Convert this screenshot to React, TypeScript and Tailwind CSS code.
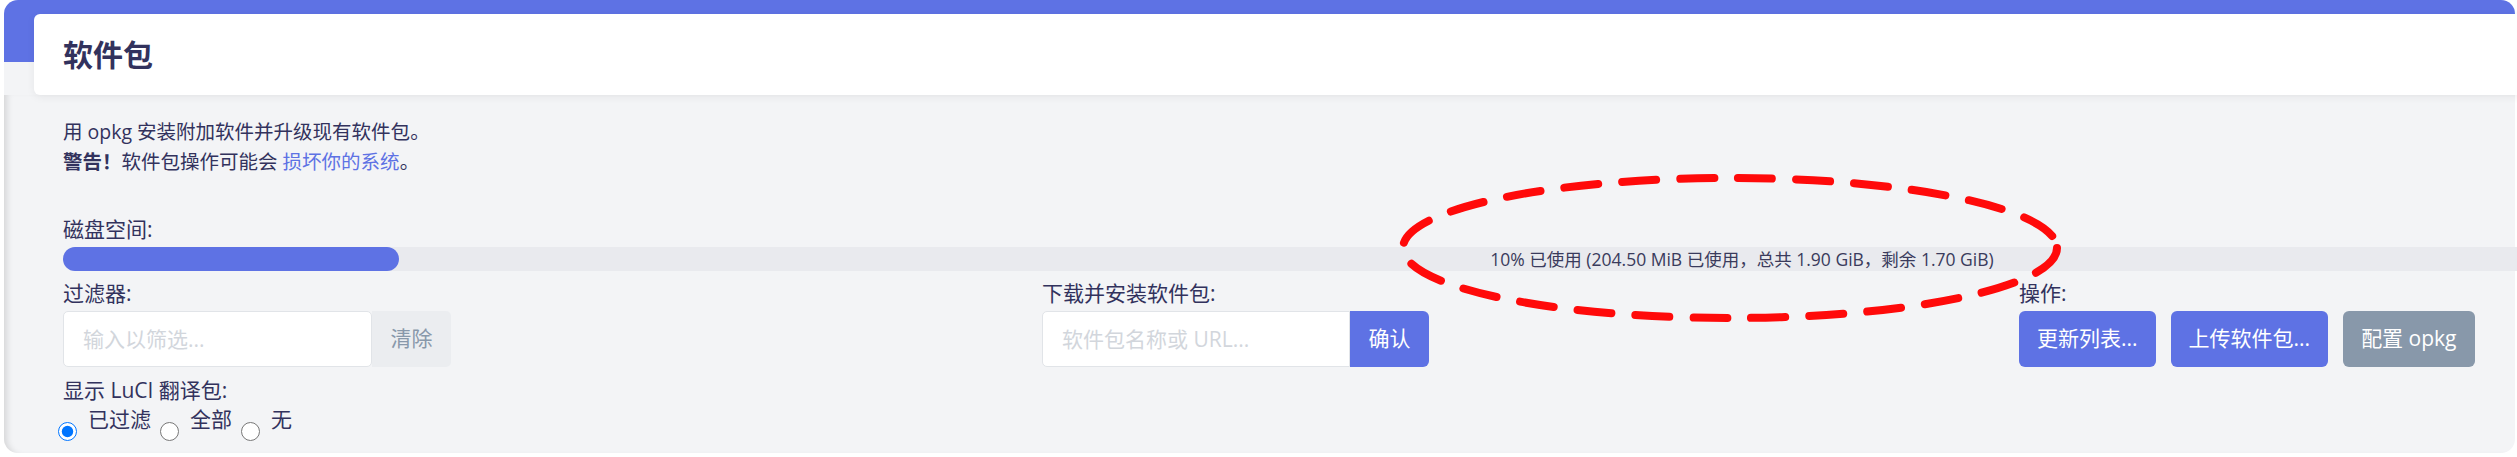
import React from "react";

function Radio({ checked, label, last }: { checked?: boolean; label: string; last?: boolean }) {
  return (
    <label className="flex items-start">
      <input
        type="radio"
        name="luci"
        defaultChecked={checked}
        className="m-0 mt-[17px] h-[19px] w-[19px] accent-[#0075ff]"
      />
      <span className={`ml-[11px] leading-[28px] ${last ? "" : "mr-[9px]"}`}>{label}</span>
    </label>
  );
}

export default function App() {
  return (
    <div className="relative h-[457px] w-[2517px] overflow-hidden bg-white font-['Open_Sans','Noto_Sans_CJK_SC',sans-serif] text-[#32325d]">
      <div className="ml-[4px] flex h-[453px] w-[2511px] flex-col rounded-[14px] bg-[linear-gradient(to_bottom,#5e72e4_0px,#5e72e4_62px,#f3f4f6_62px)]">
        {/* header */}
        <div className="pl-[30px] pt-[14px]">
          <div className="flex h-[81px] w-[2520px] items-center rounded-[6px] bg-white pl-[29px] shadow-[0_2px_8px_rgba(0,0,0,0.06)]">
            <h2 className="text-[30px] font-bold leading-none text-[#32325d]">软件包</h2>
          </div>
        </div>

        {/* body */}
        <div className="flex-1 rounded-b-[14px] pl-[59px] pt-[22px] shadow-[inset_7px_0_6px_-4px_rgba(0,0,0,0.12)]">
          <div className="text-[19.5px] leading-[30px]">
            <div>用 opkg 安装附加软件并升级现有软件包。</div>
            <div>
              <strong className="font-bold">警告！</strong>软件包操作可能会{" "}
              <a className="text-[#5e72e4]">损坏你的系统</a>。
            </div>
          </div>

          <div className="mt-[37px] text-[21px] leading-[30px]">磁盘空间:</div>
          <div className="mt-[3px] grid h-[24px] w-[3358px] rounded-full bg-[#e9eaee]">
            <div className="col-start-1 row-start-1 h-[24px] w-[336px] rounded-full bg-[#5e72e4]" />
            <div className="col-start-1 row-start-1 self-center justify-self-center text-[17.5px] leading-[24px] text-[#3a3b5c]">
              10% 已使用 (204.50 MiB 已使用，总共 1.90 GiB，剩余 1.70 GiB)
            </div>
          </div>

          <div className="mt-[7px] grid grid-cols-[979px_977px_auto] text-[21px]">
            <div>
              <div className="leading-[30px]">过滤器:</div>
              <div className="mt-[3px] flex">
                <input
                  placeholder="输入以筛选..."
                  className="h-[56px] w-[309px] rounded-[5px] border border-[#e1e4e8] bg-white pl-[19px] text-[21px] outline-none placeholder:text-[#d2d6dc]"
                />
                <button className="h-[56px] w-[79px] rounded-r-[5px] bg-[#ebedf0] text-[21px] text-[#8898aa]">清除</button>
              </div>
            </div>
            <div>
              <div className="leading-[30px]">下载并安装软件包:</div>
              <div className="mt-[3px] flex">
                <input
                  placeholder="软件包名称或 URL..."
                  className="h-[56px] w-[308px] rounded-l-[5px] border border-[#e1e4e8] bg-white pl-[19px] text-[21px] outline-none placeholder:text-[#d2d6dc]"
                />
                <button className="h-[56px] w-[79px] rounded-r-[6px] bg-[#5e72e4] text-[21px] text-white">确认</button>
              </div>
            </div>
            <div>
              <div className="leading-[30px]">操作:</div>
              <div className="mt-[3px] flex gap-[15px]">
                <button className="h-[56px] rounded-[6px] bg-[#5e72e4] px-[18px] text-[21px] text-white">更新列表...</button>
                <button className="h-[56px] rounded-[6px] bg-[#5e72e4] px-[18px] text-[21px] text-white">上传软件包...</button>
                <button className="h-[56px] rounded-[6px] bg-[#8898aa] px-[18px] text-[21px] text-white">配置 opkg</button>
              </div>
            </div>
          </div>

          <div className="mt-[8px] text-[21px] leading-[30px]">显示 LuCI 翻译包:</div>
          <div className="-ml-[5px] flex text-[21px]">
            <Radio checked label="已过滤" />
            <Radio label="全部" />
            <Radio label="无" last />
          </div>
        </div>
      </div>

      {/* red annotation */}
      <svg
        className="pointer-events-none absolute left-[1396px] top-[170px]"
        width="670"
        height="160"
        viewBox="0 0 670 160"
      >
        <ellipse
          cx="334"
          cy="78"
          rx="327"
          ry="70"
          fill="none"
          stroke="#ff0a0a"
          strokeWidth="8"
          strokeDasharray="34 24"
          strokeLinecap="round"
        />
      </svg>
    </div>
  );
}
